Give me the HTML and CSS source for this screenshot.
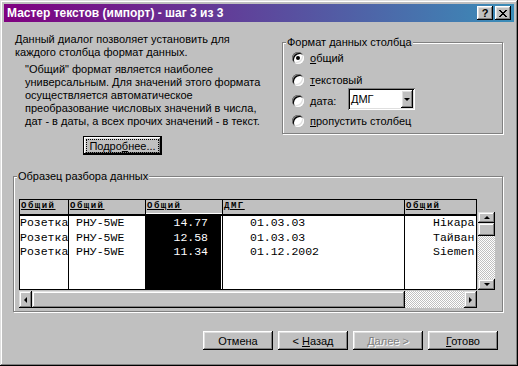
FILE: index.html
```html
<!DOCTYPE html>
<html lang="ru">
<head>
  <meta charset="UTF-8" />
  <meta name="viewport" content="width=device-width, initial-scale=1.0"/>
  <title>Мастер текстов (импорт) - шаг 3 из 3</title>
  <link rel="stylesheet" href="styles.css">
</head>
<body>

  <div class="window">
    <div class="titlebar">
      <span class="title">Мастер текстов (импорт) - шаг 3 из 3</span>
      <div class="title-buttons">
        <span class="tbtn">?</span>
        <span class="tbtn">
          <svg width="8" height="7" viewBox="0 0 8 7">
            <path d="M0 0h2v1h1v1h2v-1h1v-1h2v1h-1v1h-1v1h-1v1h1v1h1v1h1v1h-2v-1h-1v-1h-2v1h-1v1h-2v-1h1v-1h1v-1h1v-1h-1v-1h-1v-1h-1z" fill="#000"/>
          </svg>
        </span>
      </div>
    </div>

    <div class="dialog">
      <div class="top">
        <div class="intro">
          <p>Данный диалог позволяет установить для<br>каждого столбца формат данных.</p>
          <p class="note">"Общий" формат является наиболее<br>универсальным. Для значений этого формата<br>осуществляется автоматическое<br>преобразование числовых значений в числа,<br>дат - в даты, а всех прочих значений - в текст.</p>
          <button class="btn btn-default"><span class="focus">Подро<u>б</u>нее...</span></button>
        </div>

        <div class="group format">
          <span class="group-title">Формат данных столбца</span>
          <div class="radio-row row-1"><span class="radio checked"></span><span><u>о</u>бщий</span></div>
          <div class="radio-row row-2"><span class="radio"></span><span><u>т</u>екстовый</span></div>
          <div class="radio-row row-3">
            <span class="radio"></span><span class="date-label"><u>д</u>ата:</span>
            <div class="combo"><span class="combo-text">ДМГ</span><span class="combo-btn"><i class="tri-down"></i></span></div>
          </div>
          <div class="radio-row row-4"><span class="radio"></span><span><u>п</u>ропустить столбец</span></div>
        </div>
      </div>

      <div class="group sample">
        <span class="group-title">Образец разбора данных</span>
        <div class="preview">
          <div class="grid">
            <div class="col c1">
              <div class="head">Общий</div>
              <div class="cells">Розетка<br>Розетка<br>Розетка</div>
            </div>
            <div class="col c2">
              <div class="head">Общий</div>
              <div class="cells">РНУ-5WE<br>РНУ-5WE<br>РНУ-5WE</div>
            </div>
            <div class="col c3 selected">
              <div class="head">Общий</div>
              <div class="cells">14.77<br>12.58<br>11.34</div>
            </div>
            <div class="col c4">
              <div class="head">ДМГ</div>
              <div class="cells">01.03.03<br>01.03.03<br>01.12.2002</div>
            </div>
            <div class="col c5">
              <div class="head">Общий</div>
              <div class="cells">Нікара<br>Тайван<br>Siemen</div>
            </div>
          </div>
          <div class="vscroll">
            <span class="sb-btn sb-up"><i class="tri-up"></i></span>
            <span class="sb-thumb"></span>
            <span class="sb-track"></span>
            <span class="sb-btn sb-down"><i class="tri-down"></i></span>
          </div>
        </div>
        <div class="hscroll">
          <span class="sb-btn sb-left"><i class="tri-left"></i></span>
          <span class="sb-thumb"></span>
          <span class="sb-track"></span>
          <span class="sb-btn sb-right"><i class="tri-right"></i></span>
        </div>
      </div>

      <div class="actions">
        <button class="btn">Отмена</button>
        <button class="btn">&lt; <u>Н</u>азад</button>
        <button class="btn disabled">Далее &gt;</button>
        <button class="btn"><u>Г</u>отово</button>
      </div>
    </div>
  </div>

</body>
</html>
```

FILE: styles.css
```css
* {
  box-sizing: border-box;
}

body {
  margin: 0;
  padding: 0;
  background: #c0c0c0;
  color: #000;
  font-family: "Liberation Sans", Arial, sans-serif;
  font-size: 11px;
}

u {
  text-decoration: underline;
  text-underline-offset: 1px;
}

.window {
  width: 518px;
  height: 366px;
  padding: 4px;
  background: #c0c0c0;
  display: flex;
  flex-direction: column;
  box-shadow: inset -1px -1px #000, inset 1px 1px #dfdfdf, inset -2px -2px #808080, inset 2px 2px #fff;
}

/* title bar */
.titlebar {
  height: 18px;
  display: flex;
  align-items: center;
  justify-content: space-between;
  padding: 0 3px;
  background: linear-gradient(to right, #800080, #3a8db8);
  color: #fff;
  font-weight: bold;
  font-size: 12px;
}

.title-buttons {
  display: flex;
  gap: 2px;
}

.tbtn {
  width: 16px;
  height: 14px;
  display: flex;
  align-items: center;
  justify-content: center;
  background: #c0c0c0;
  color: #000;
  font-size: 11px;
  font-weight: bold;
  box-shadow: inset -1px -1px #000, inset 1px 1px #fff, inset -2px -2px #808080, inset 2px 2px #dfdfdf;
}

/* dialog body */
.dialog {
  flex: 1;
  display: flex;
  flex-direction: column;
  padding: 11px 11px 0 9px;
}

.top {
  display: flex;
  align-items: flex-start;
}

.intro {
  width: 269px;
  padding-left: 2px;
  white-space: nowrap;
  line-height: 13px;
}

.intro p {
  margin: 0;
}

.intro .note {
  margin-top: 4px;
  padding-left: 10px;
}

.btn {
  font-family: inherit;
  font-size: 11px;
  color: #000;
  background: #c0c0c0;
  border: none;
  padding: 0;
  width: 70px;
  height: 19px;
  box-shadow: inset -1px -1px #000, inset 1px 1px #fff, inset -2px -2px #808080, inset 2px 2px #dfdfdf;
}

.btn-default {
  display: flex;
  align-items: center;
  justify-content: center;
  width: 79px;
  height: 19px;
  margin: 8px 0 0 68px;
  border: 1px solid #000;
}

.btn-default .focus {
  padding: 0 2px;
  line-height: 12px;
  outline: 1px dotted #000;
}

.btn.disabled {
  color: #808080;
  text-shadow: 1px 1px #fff;
}

/* group boxes */
.group {
  position: relative;
  border: 1px solid #808080;
  box-shadow: inset 1px 1px #fff, 1px 1px #fff;
}

.group-title {
  position: absolute;
  top: -7px;
  left: 3px;
  padding: 0 1px;
  line-height: 13px;
  background: #c0c0c0;
  white-space: nowrap;
}

.format {
  width: 221px;
  height: 92px;
  margin-top: 9px;
  padding: 5px 0 0 9px;
}

.radio-row {
  display: flex;
  align-items: center;
  gap: 6px;
  height: 21px;
}

.row-1 { height: 20px; }
.row-2 { height: 23px; }
.row-3 { height: 20px; }
.row-4 { height: 20px; }

.radio {
  position: relative;
  width: 12px;
  height: 12px;
  border-radius: 50%;
  background: #fff;
  box-shadow: inset 1px 1px #808080, inset -1px -1px #fff, inset 2px 2px #000, inset -2px -2px #dfdfdf;
}

.radio.checked::after {
  content: "";
  position: absolute;
  left: 4px;
  top: 4px;
  width: 4px;
  height: 4px;
  border-radius: 50%;
  background: #000;
}

.date-label {
  width: 32px;
}

.combo {
  display: flex;
  align-items: center;
  align-self: flex-start;
  width: 67px;
  height: 22px;
  margin-top: -3px;
  padding: 2px;
  background: #fff;
  box-shadow: inset 1px 1px #808080, inset -1px -1px #fff, inset 2px 2px #000, inset -2px -2px #dfdfdf;
}

.combo-text {
  flex: 1;
  padding-left: 1px;
}

.combo-btn {
  width: 12px;
  height: 18px;
  display: flex;
  align-items: center;
  justify-content: center;
  background: #c0c0c0;
  box-shadow: inset -1px -1px #000, inset 1px 1px #fff, inset -2px -2px #808080, inset 2px 2px #dfdfdf;
}

/* data sample */
.sample {
  width: 490px;
  margin-top: 21px;
  padding: 22px 7px 3px 5px;
}

.preview {
  display: flex;
  align-items: flex-start;
}

.grid {
  display: flex;
  width: 458px;
  height: 91px;
  border: 1px solid #000;
  background: #fff;
}

.col {
  display: flex;
  flex-direction: column;
  border-right: 1px solid #000;
  overflow: hidden;
}

.c1 { width: 49px; }
.c2 { width: 77px; }
.c3 { width: 77px; }
.c4 { width: 182px; }
.c5 { width: 71px; border-right: none; }

.head {
  height: 16px;
  padding: 0 0 0 1px;
  background: #c0c0c0;
  border-bottom: 2px solid #000;
  font-family: "Liberation Mono", monospace;
  font-size: 9px;
  font-weight: bold;
  line-height: 13px;
  letter-spacing: 1.5px;
  text-decoration: underline;
  white-space: nowrap;
}

.cells {
  flex: 1;
  font-family: "Liberation Mono", "Courier New", monospace;
  font-size: 11.5px;
  line-height: 14.5px;
  white-space: nowrap;
  overflow: hidden;
}

.c2 .cells { padding-left: 7px; }
.c3 .cells { padding-right: 14px; text-align: right; }
.c4 .cells { padding-left: 27px; }
.c5 .cells { padding-left: 28px; }

.selected .head {
  box-shadow: inset 0 -1px #fff;
}

.selected .cells {
  background: #000;
  color: #fff;
  box-shadow: inset -1px 0 #fff;
}

/* scroll bars */
.vscroll {
  display: flex;
  flex-direction: column;
  width: 17px;
  height: 78px;
  margin: 13px 0 0 1px;
}

.hscroll {
  display: flex;
  width: 458px;
  height: 17px;
  margin-top: 1px;
}

.sb-btn,
.sb-thumb {
  display: flex;
  align-items: center;
  justify-content: center;
  background: #c0c0c0;
  box-shadow: inset -1px -1px #000, inset 1px 1px #dfdfdf, inset -2px -2px #808080, inset 2px 2px #fff;
}

.sb-track {
  flex: 1;
  background: repeating-conic-gradient(#fff 0 25%, #c0c0c0 0 50%) 0 0 / 2px 2px;
}

.vscroll .sb-btn { height: 11px; }
.vscroll .sb-thumb { height: 13px; }
.hscroll .sb-btn { width: 13px; }
.hscroll .sb-thumb { width: 373px; }

.tri-up,
.tri-down,
.tri-left,
.tri-right {
  width: 0;
  height: 0;
  border: 3px solid transparent;
}

.tri-up { border-bottom-color: #000; border-top-width: 0; }
.tri-down { border-top-color: #000; border-bottom-width: 0; }
.tri-left { border-right-color: #000; border-left-width: 0; }
.tri-right { border-left-color: #000; border-right-width: 0; }

/* bottom buttons */
.actions {
  display: flex;
  justify-content: flex-end;
  gap: 5px;
  margin-top: 19px;
  padding-right: 5px;
}
```
